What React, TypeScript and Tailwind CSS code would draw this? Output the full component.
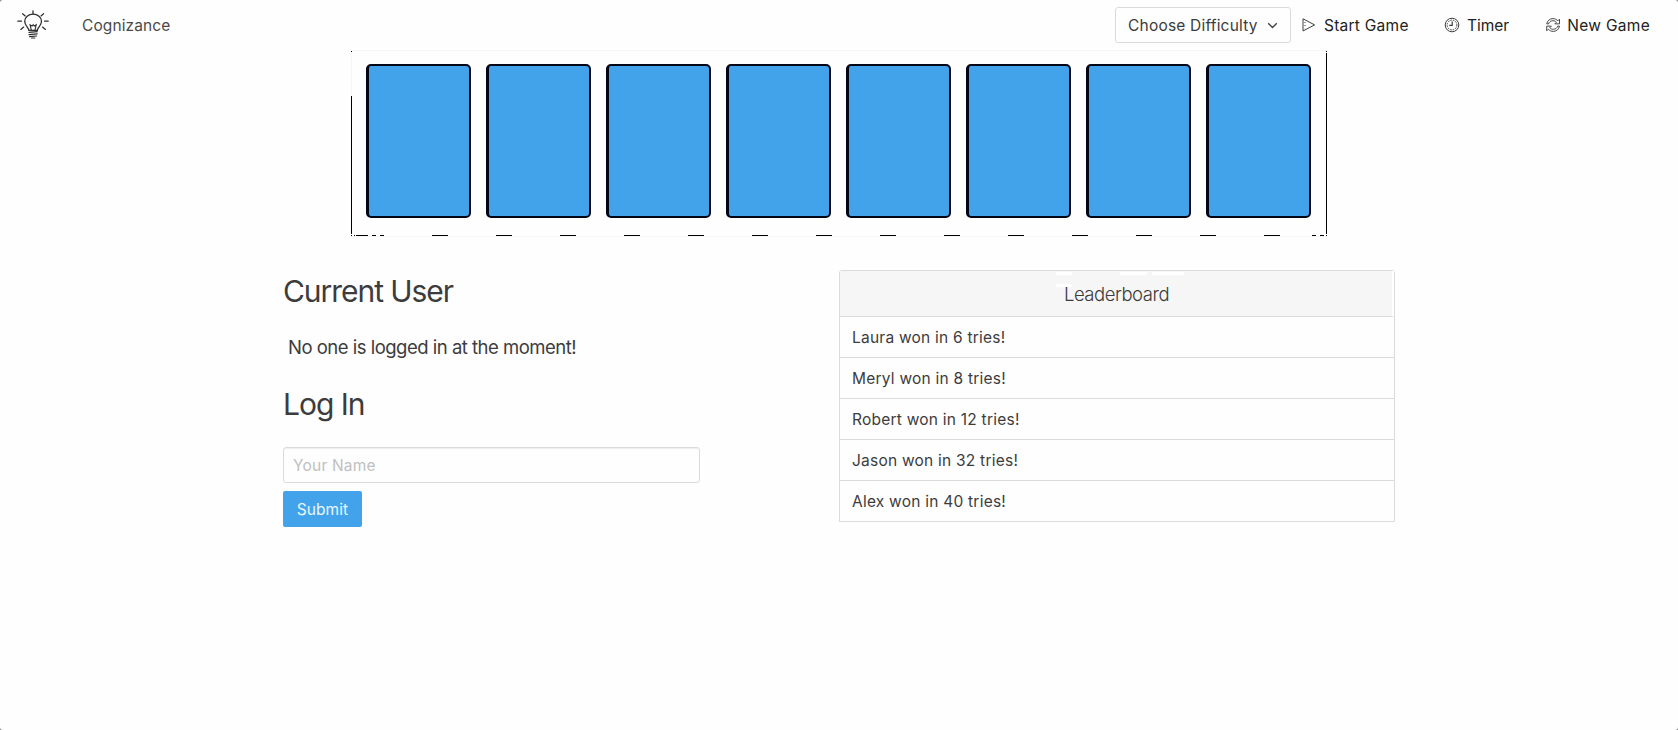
import React from "react";

const winners = [
  { name: "Laura", tries: 6 },
  { name: "Meryl", tries: 8 },
  { name: "Robert", tries: 12 },
  { name: "Jason", tries: 32 },
  { name: "Alex", tries: 40 },
];

function BulbIcon() {
  return (
    <svg width="32" height="30" viewBox="0 0 32 30" fill="none" stroke="#2f2f2f" strokeWidth="1.3" strokeLinecap="round">
      <path d="M11.9 20.4c0-2.6-4.2-4.5-4.2-9.1a8.4 7.1 0 0 1 16.8 0c0 4.600-4.200 6.500-4.200 9.100z" />
      <path d="M14.3 20.2l-1.2-5.4 1.9 1.2 1.2-1.2 1.2 1.2 1.800-1.200-1.200 5.400" strokeWidth="1.1" />
      <path d="M12 22.4l8.2-.7M12 24.6l8.2-.7M12.6 26.6l7-.6M14.6 28h3.2" strokeWidth="1.2" />
      <path d="M16 .8v3M5.6 3.8l2.6 2.1M26.6 3.8L24 5.9M.9 11.2h3.6M27.6 11.2h3.6M3.8 19.4l2.9-2.3M28.4 19.4l-2.9-2.3" />
    </svg>
  );
}

function PlayIcon() {
  return (
    <svg width="14" height="16" viewBox="0 0 14 16" fill="none" stroke="#3f3f3f">
      <path d="M1 1.8L12.6 7.9 1 14z" strokeWidth="1" />
      <path d="M3 5v6.200" strokeWidth="1" strokeDasharray="1 2" />
    </svg>
  );
}

function ClockIcon() {
  return (
    <svg width="16" height="16" viewBox="0 0 16 16" fill="none" stroke="#3f3f3f" strokeWidth="1">
      <circle cx="8" cy="8" r="6.800" />
      <circle cx="8" cy="8" r="4.900" strokeDasharray="1.6 1" />
      <path d="M8.200 4.400v4H5.300" strokeWidth="1.2" />
    </svg>
  );
}

function SyncIcon() {
  return (
    <svg width="17" height="16" viewBox="0 0 17 16" fill="none" stroke="#3f3f3f" strokeWidth="1">
      <path d="M1.800 6.800C2.400 3.600 5 1.300 8.300 1.300c2.200 0 4 .9 5.200 2.300l1.700-1.700v4.900h-4.900l1.700-1.700c-.9-1-2.200-1.600-3.700-1.600-2.200 0-4 1.300-4.500 3.300z" />
      <path d="M15.200 9.200c-.6 3.200-3.200 5.500-6.500 5.500-2.200 0-4-.9-5.200-2.300l-1.700 1.700V9.200h4.900L5 10.900c.9 1 2.200 1.600 3.700 1.600 2.200 0 4-1.300 4.500-3.300z" />
    </svg>
  );
}

function DashedEdge() {
  const dashes = [[5, 12], [21, 4], [29, 4], ...Array.from({ length: 14 }, (_, i) => [81 + i * 64, 16]), [961, 4], [969, 4]];
  return (
    <svg className="block" width="976" height="2" viewBox="0 0 976 2" shapeRendering="crispEdges">
      <rect x="0" y="1" width="976" height="1" fill="#f5f5f5" />
      <rect x="0" y="0" width="1" height="1" fill="#000" />
      <rect x="3" y="0" width="1" height="1" fill="#000" />
      {dashes.map(([x, w]) => (
        <rect key={x} x={x} y="0" width={w} height="1" fill="#000" />
      ))}
      <rect x="975" y="0" width="1" height="1" fill="#000" />
    </svg>
  );
}

function Board() {
  return (
    <section className="mx-auto w-[976px]">
      <div className="flex h-[185px] border-t border-[#f5f5f5]">
        <div className="flex w-px flex-col">
          <div className="h-px bg-black" />
          <div className="h-[44px] bg-[#f5f5f5]" />
          <div className="h-[138px] bg-black" />
        </div>
        <div className="flex flex-1 gap-[15px] pl-[14px] pt-[13px]">
          {Array.from({ length: 8 }, (_, i) => (
            <button
              key={i}
              aria-label={`Card ${i + 1}`}
              className="h-[154px] w-[105px] rounded-[5px] border-2 border-l-[3px] border-[#020617] bg-[#42a3eb]"
            />
          ))}
        </div>
        <div className="flex w-px flex-col">
          <div className="h-px bg-black" />
          <div className="h-px" />
          <div className="h-[181px] bg-black" />
        </div>
      </div>
      <DashedEdge />
    </section>
  );
}

export default function App() {
  return (
    <div className="bg-[#888888]">
      <div className="h-[730px] overflow-hidden rounded-[3px] bg-[#fefefe] font-['Inter','Liberation_Sans',sans-serif] text-[15.5px] leading-6 text-[#3c3c3c]">
        <nav className="flex h-[50px] items-center pl-[17px] pr-[28px]">
          <BulbIcon />
          <span className="ml-[33px] pt-[2px] tracking-[0.1px] text-[#4a4a4a]">Cognizance</span>
          <button className="ml-auto flex h-[36px] w-[176px] items-center justify-between rounded-[3px] border border-[#dbdbdb] pl-[12px] pr-[12px] tracking-[0.2px]">
            <span className="pt-[2px]">Choose Difficulty</span>
            <svg className="mt-[1px]" width="11" height="7" viewBox="0 0 11 7" fill="none" stroke="#444444" strokeWidth="1.4">
              <path d="M1.200 1.200l4.300 4.300 4.300-4.300" />
            </svg>
          </button>
          <div className="ml-[11px] flex w-[143px] items-center gap-[8px] tracking-[0.25px] text-[#222222]">
            <PlayIcon />
            <span className="pt-[2px]">Start Game</span>
          </div>
          <div className="flex w-[100px] items-center gap-[7px] text-[#222222]">
            <span className="-ml-px">
              <ClockIcon />
            </span>
            <span className="pt-[2px]">Timer</span>
          </div>
          <div className="flex w-[105px] items-center gap-[6px] whitespace-nowrap tracking-[0.3px] text-[#222222]">
            <SyncIcon />
            <span className="pt-[2px]">New Game</span>
          </div>
        </nav>

        <Board />

        <main className="mx-auto flex w-[1112px] pt-[33px]">
          <section className="w-[556px]">
            <h2 className="pt-[1px] text-[30px] leading-[40px] tracking-[-1.05px]">Current User</h2>
            <p className="pl-[5px] pt-[23px] text-[18.5px] leading-[26px] tracking-[-0.5px]">No one is logged in at the moment!</p>
            <h2 className="pt-[24px] text-[30px] leading-[40px] tracking-[-1px]">Log In</h2>
            <form className="pt-[23px]" onSubmit={(e) => e.preventDefault()}>
              <input
                placeholder="Your Name"
                className="block h-[36px] w-[417px] rounded-[3px] border border-[#dbdbdb] px-[9px] tracking-[0.2px] shadow-[inset_0_1px_1px_#eeeeee] outline-none placeholder:text-[#c0c0c0]"
              />
              <button className="mt-[8px] block h-[36px] w-[79px] rounded-[2px] bg-[#42a3eb] pt-[2px] text-center tracking-[0.1px] text-[#e8f8ff]">
                Submit
              </button>
            </form>
          </section>

          <section className="h-[252px] w-[556px] rounded-t-[3px] border border-[#dbdbdb]">
            <h3 className="relative h-[46px] border-b border-r-2 border-b-[#dbdbdb] border-r-white bg-[#f6f6f6] pl-[1px] text-center text-[18.5px] font-light leading-[47px] tracking-[-0.45px]">
              Leaderboard
              <span className="absolute left-[216px] top-px h-[3px] w-[16px] bg-white" />
              <span className="absolute left-[216px] top-[13px] h-[3px] w-[16px] bg-white" />
              <span className="absolute left-[280px] top-px h-[3px] w-[27px] bg-white" />
              <span className="absolute left-[312px] top-px h-[3px] w-[32px] bg-white" />
            </h3>
            <ul>
              {winners.map((w) => (
                <li key={w.name} className="h-[41px] border-b border-[#dbdbdb] pl-[12px] leading-[42px] tracking-[0.23px] last:border-b-0">
                  {w.name} won in {w.tries} tries!
                </li>
              ))}
            </ul>
          </section>
        </main>
      </div>
    </div>
  );
}
